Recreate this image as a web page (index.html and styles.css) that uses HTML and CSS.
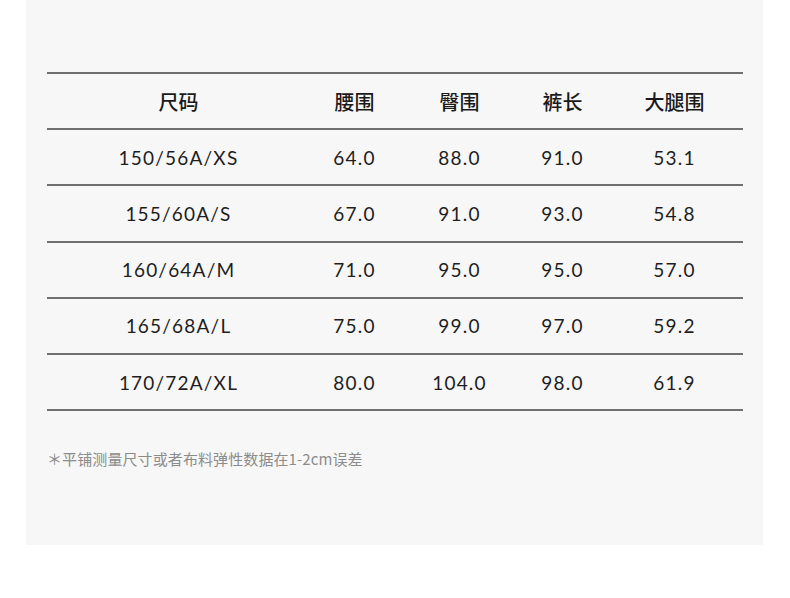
FILE: index.html
```html
<!DOCTYPE html>
<html lang="zh">
<head>
<meta charset="utf-8">
<link rel="stylesheet" href="styles.css">
</head>
<body>
<div class="panel">
  <div class="table">
    <div class="row head">
      <div>尺码</div><div>腰围</div><div>臀围</div><div>裤长</div><div>大腿围</div>
    </div>
    <div class="row">
      <div>150/56A/XS</div><div>64.0</div><div>88.0</div><div>91.0</div><div>53.1</div>
    </div>
    <div class="row">
      <div>155/60A/S</div><div>67.0</div><div>91.0</div><div>93.0</div><div>54.8</div>
    </div>
    <div class="row">
      <div>160/64A/M</div><div>71.0</div><div>95.0</div><div>95.0</div><div>57.0</div>
    </div>
    <div class="row">
      <div>165/68A/L</div><div>75.0</div><div>99.0</div><div>97.0</div><div>59.2</div>
    </div>
    <div class="row last">
      <div>170/72A/XL</div><div>80.0</div><div>104.0</div><div>98.0</div><div>61.9</div>
    </div>
  </div>
  <p class="note">＊平铺测量尺寸或者布料弹性数据在1-2cm误差</p>
</div>
</body>
</html>
```

FILE: styles.css
```css
html, body {
  margin: 0;
  padding: 0;
  background: #ffffff;
}
.panel {
  box-sizing: border-box;
  margin-left: 26px;
  width: 737px;
  height: 545px;
  background: #f7f7f7;
  padding: 72px 20px 0 21px;
}
.table {
  width: 696px;
  border-top: 2px solid #707070;
}
.row {
  display: grid;
  grid-template-columns: 262px 90px 120px 86px 138px;
  height: 54.2px;
  border-bottom: 2px solid #707070;
  align-items: center;
  font-family: "Lato", "Noto Sans CJK SC", sans-serif;
  font-size: 19px;
  letter-spacing: 1.2px;
  color: #1e1e1e;
}
.row > div {
  text-align: center;
  padding-left: 1px;
}
.row.head {
  font-family: "Noto Sans CJK SC", sans-serif;
  font-size: 20px;
  font-weight: 500;
  letter-spacing: 0;
  color: #1a1a1a;
}
.note {
  margin: 37px 0 0 0;
  font-family: "Noto Sans CJK SC", sans-serif;
  font-size: 15px;
  letter-spacing: 0.1px;
  color: #8c8c8c;
  line-height: 22px;
}
```
